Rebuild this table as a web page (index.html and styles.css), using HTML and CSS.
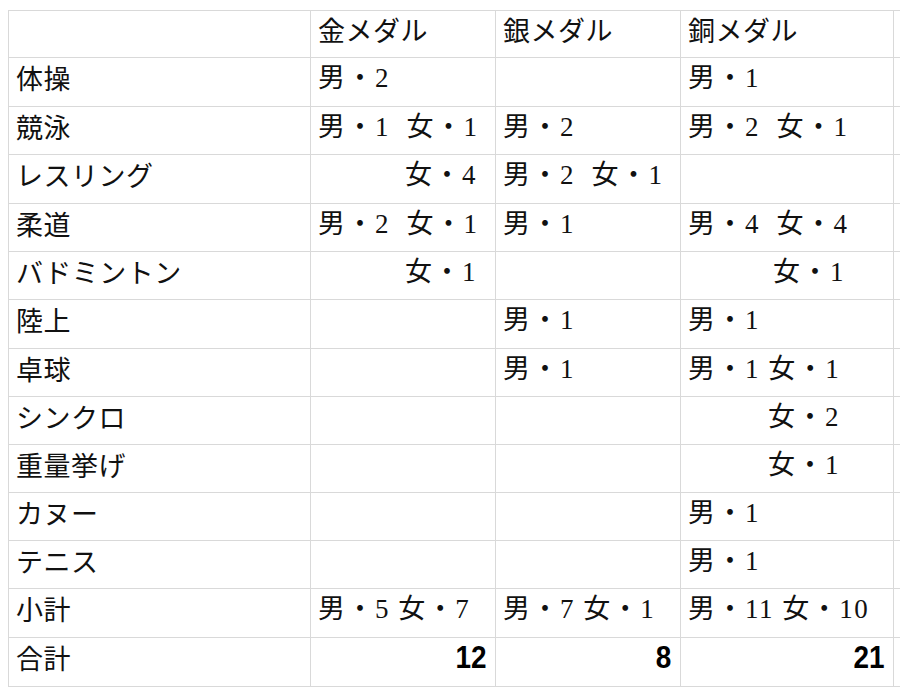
FILE: index.html
```html
<!DOCTYPE html>
<html lang="ja">
<head>
<meta charset="utf-8">
<title>メダル集計</title>
<link rel="stylesheet" href="styles.css">
</head>
<body>
<div class="sheet">
  <div class="grid">
    <div class="c lbl"></div><div class="c hd">金メダル</div><div class="c hd">銀メダル</div><div class="c hd">銅メダル</div><div class="c x"></div>

    <div class="c lbl">体操</div><div class="c d">男・2</div><div class="c d"></div><div class="c d">男・1</div><div class="c x"></div>

    <div class="c lbl">競泳</div><div class="c d">男・1  女・1</div><div class="c d">男・2</div><div class="c d">男・2  女・1</div><div class="c x"></div>

    <div class="c lbl">レスリング</div><div class="c d ind-g">女・4</div><div class="c d">男・2  女・1</div><div class="c d"></div><div class="c x"></div>

    <div class="c lbl">柔道</div><div class="c d">男・2  女・1</div><div class="c d">男・1</div><div class="c d">男・4  女・4</div><div class="c x"></div>

    <div class="c lbl">バドミントン</div><div class="c d ind-g">女・1</div><div class="c d"></div><div class="c d ind-b">女・1</div><div class="c x"></div>

    <div class="c lbl">陸上</div><div class="c d"></div><div class="c d">男・1</div><div class="c d">男・1</div><div class="c x"></div>

    <div class="c lbl">卓球</div><div class="c d"></div><div class="c d">男・1</div><div class="c d">男・1 女・1</div><div class="c x"></div>

    <div class="c lbl">シンクロ</div><div class="c d"></div><div class="c d"></div><div class="c d ind-c">女・2</div><div class="c x"></div>

    <div class="c lbl">重量挙げ</div><div class="c d"></div><div class="c d"></div><div class="c d ind-c">女・1</div><div class="c x"></div>

    <div class="c lbl">カヌー</div><div class="c d"></div><div class="c d"></div><div class="c d">男・1</div><div class="c x"></div>

    <div class="c lbl">テニス</div><div class="c d"></div><div class="c d"></div><div class="c d">男・1</div><div class="c x"></div>

    <div class="c lbl">小計</div><div class="c d">男・5 女・7</div><div class="c d">男・7 女・1</div><div class="c d">男・11 女・10</div><div class="c x"></div>

    <div class="c lbl">合計</div><div class="c tot"><span class="num">12</span></div><div class="c tot"><span class="num">8</span></div><div class="c tot"><span class="num">21</span></div><div class="c x"></div>
  </div>
</div>
</body>
</html>
```

FILE: styles.css
```css
html, body {
  margin: 0;
  padding: 0;
  background: #ffffff;
  overflow: hidden;
}

.sheet {
  padding: 10px 0 0 8px;
}

.grid {
  display: grid;
  grid-template-columns: 301px 184px 184px 212px 6px;
  grid-template-rows: 46px 48px 47px 48px 47px 47px 48px 47px 47px 47px 47px 47px 48px 48px;
  gap: 1px;
  padding: 1px 0 1px 1px;
  background: #d9d9d9;
  width: 892px;
  box-sizing: border-box;
}

.c {
  background: #ffffff;
  color: #111111;
  font-size: 27px;
  line-height: 32px;
  padding: 4px 0 0 7px;
  white-space: pre;
}

.lbl,
.hd {
  font-family: "Noto Sans CJK JP", sans-serif;
  letter-spacing: 0.5px;
}

.hd {
  padding-top: 3px;
}

.d {
  font-family: "Liberation Serif", "Noto Sans CJK JP", serif;
  letter-spacing: 1.5px;
}

.ind-g { text-indent: 87px; }
.ind-b { text-indent: 85px; }
.ind-c { text-indent: 80px; }

.tot {
  font-family: "Liberation Sans", sans-serif;
  font-weight: bold;
  font-size: 31px;
  line-height: 34px;
  text-align: right;
  padding: 3px 9px 0 0;
  color: #000000;
}

.num {
  display: inline-block;
  transform: scaleX(0.9);
  transform-origin: right center;
}

.x {
  padding: 0;
}
```
